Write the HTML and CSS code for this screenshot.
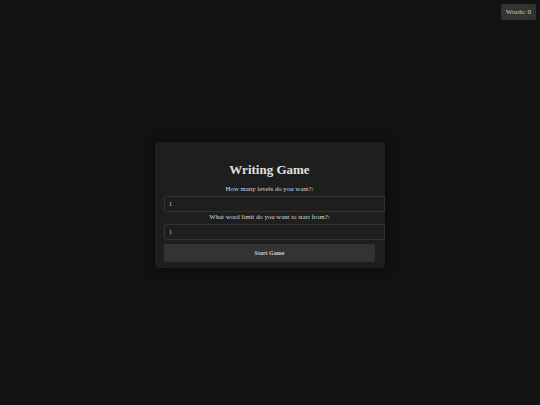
FILE: index.html
```html
<!DOCTYPE html>
<html lang="en">
<head>
    <meta charset="UTF-8">
    <meta name="viewport" content="width=device-width, initial-scale=1.0">
    <title>Writing Game</title>
    <link rel="stylesheet" href="styles.css">
</head>
<body>
    <div class="counter">Words: 0</div>
    <form class="setup">
        <h1>Writing Game</h1>
        <label for="levels">How many levels do you want?:</label>
        <input type="number" id="levels" value="1">
        <label for="limit">What word limit do you want to start from?:</label>
        <input type="number" id="limit" value="1">
        <button type="submit">Start Game</button>
    </form>
</body>
</html>
```

FILE: styles.css
```css
*{
    margin: 0;
    box-sizing: content-box;
}
html, body{
    height: 100%;
}
body{
    background-color: #121212;
    color: #e0e0e0;
    font-family: "Liberation Serif", "DejaVu Serif", serif;
    display: flex;
    justify-content: center;
    align-items: center;
    padding-top: 4px;
    box-sizing: border-box;
}
.counter{
    position: fixed;
    top: 4px;
    right: 4px;
    background-color: #333333;
    color: #cfcfcf;
    font-size: 7px;
    padding: 4px 5px;
    border-radius: 2px;
}
.setup{
    background-color: #1e1e1e;
    width: 211px;
    padding: 14px 10px 6px 9px;
    border-radius: 4px;
    box-shadow: 0 0 10px rgba(0, 0, 0, 0.6);
    display: flex;
    flex-direction: column;
    align-items: center;
}
h1{
    font-size: 13px;
    line-height: 15px;
    font-weight: bold;
    margin: 6px 0 7px;
}
label{
    font-size: 6.8px;
    color: #d8d8d8;
    line-height: 9px;
    margin-bottom: 3px;
}
input{
    align-self: stretch;
    width: 100%;
    background-color: #1e1e1e;
    border: 1px solid #333333;
    border-radius: 2px;
    color: #d0d0d0;
    font-family: inherit;
    font-size: 6px;
    padding: 4px;
    height: 6px;
    outline: none;
    -moz-appearance: textfield;
}
input::-webkit-inner-spin-button{
    -webkit-appearance: none;
}
button{
    align-self: stretch;
    margin-top: 4px;
    height: 16px;
    background-color: #333333;
    color: #cccccc;
    border: none;
    border-radius: 2px;
    font-family: inherit;
    font-size: 6px;
    font-weight: bold;
    cursor: pointer;
}
```
